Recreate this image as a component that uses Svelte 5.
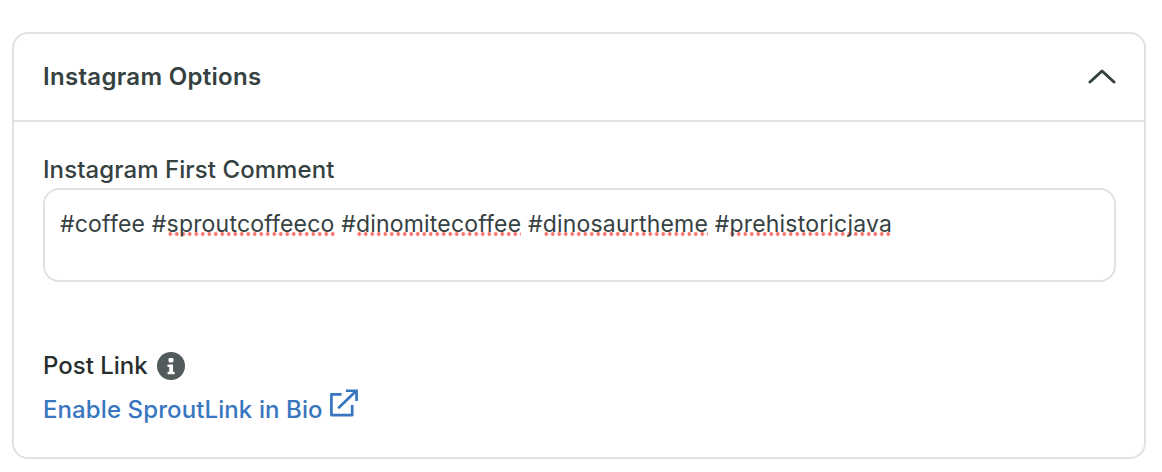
<script>
  let open = $state(true)
  const tags = [
    { hash: '#', word: 'coffee', misspelled: false },
    { hash: '#', word: 'sproutcoffeeco', misspelled: true },
    { hash: '#', word: 'dinomitecoffee', misspelled: true },
    { hash: '#', word: 'dinosaurtheme', misspelled: true },
    { hash: '#', word: 'prehistoricjava', misspelled: true }
  ]
</script>

<div class="page">
  <section class="card">
    <header class="card-head">
      <h2>Instagram Options</h2>
      <button class="toggle" aria-label="Collapse" onclick={() => (open = !open)}>
        <svg width="28" height="16" viewBox="0 0 28 16" fill="none">
          <path d="M2 14 L14 3 L26 14" stroke="#364141" stroke-width="3" stroke-linecap="round" stroke-linejoin="round" />
        </svg>
      </button>
    </header>
    {#if open}
      <div class="card-body">
        <div class="label">Instagram First Comment</div>
        <div class="comment">
          {#each tags as tag, i}{#if i > 0}{' '}{/if}{tag.hash}<span class:bad={tag.misspelled}>{tag.word}</span>{/each}
        </div>
        <div class="post-link">
          <span>Post Link</span>
          <svg class="info" width="28" height="28" viewBox="0 0 28 28">
            <circle cx="14" cy="14" r="14" fill="#515b5b" />
            <rect x="11.5" y="6" width="5" height="4.5" rx="1.4" fill="#fff" />
            <path d="M10.5 12.5h5.5v7.2h1.6v2.6h-7v-2.6h1.6v-4.6h-1.7z" fill="#fff" />
          </svg>
        </div>
        <a class="sprout" href="#bio">
          Enable SproutLink in Bio
          <svg width="29" height="29" viewBox="0 0 30 30" fill="none" stroke="#3876c0" stroke-width="2.8">
            <path d="M13 5.5 H2.5 V27 H24 V16.5" stroke-linejoin="round" />
            <path d="M9.5 20 L27.5 2.5" />
            <path d="M17.5 1.8 H28.5 V12.5" />
          </svg>
        </a>
      </div>
    {/if}
  </section>
</div>

<style>
  :global(body) {
    margin: 0;
    background: #fff;
  }

  .page {
    width: 1162px;
    height: 472px;
    padding: 32px 16px 0 12px;
    box-sizing: border-box;
    font-family: Inter, "Liberation Sans", sans-serif;
    color: #364141;
  }

  .card {
    height: 427px;
    box-sizing: border-box;
    border: 2px solid #e0e2e2;
    border-radius: 16px;
  }

  .card-head {
    height: 88px;
    box-sizing: border-box;
    border-bottom: 2px solid #e0e2e2;
    padding: 0 28px 2px 29px;
    display: flex;
    align-items: center;
    justify-content: space-between;
  }

  h2 {
    margin: 0;
    font-size: 24px;
    font-weight: 600;
    letter-spacing: 0.3px;
  }

  .toggle {
    border: 0;
    padding: 0;
    background: none;
    display: flex;
    cursor: pointer;
  }

  .card-body {
    padding: 33px 28px 0 29px;
  }

  .label {
    font-size: 24px;
    font-weight: 500;
    letter-spacing: 0.08px;
    line-height: 29px;
  }

  .comment {
    margin-top: 4px;
    height: 94px;
    box-sizing: border-box;
    border: 2px solid #e0e2e2;
    border-radius: 16px;
    padding: 18px 15px;
    font-size: 23px;
    letter-spacing: 0.19px;
    line-height: 32px;
  }

  .bad {
    background: radial-gradient(circle, #f8736a 1.6px, transparent 2.1px) left bottom 2px / 6.5px 4px repeat-x;
  }

  .post-link {
    margin-top: 69px;
    display: flex;
    align-items: center;
    gap: 9px;
    font-size: 24px;
    font-weight: 500;
    color: #272e2e;
  }

  .sprout {
    margin-top: 15px;
    display: inline-flex;
    align-items: flex-start;
    gap: 6px;
    font-size: 24px;
    font-weight: 500;
    letter-spacing: 0.1px;
    color: #3876c0;
    text-decoration: none;
  }

  .sprout svg {
    margin-top: -6px;
  }
</style>
